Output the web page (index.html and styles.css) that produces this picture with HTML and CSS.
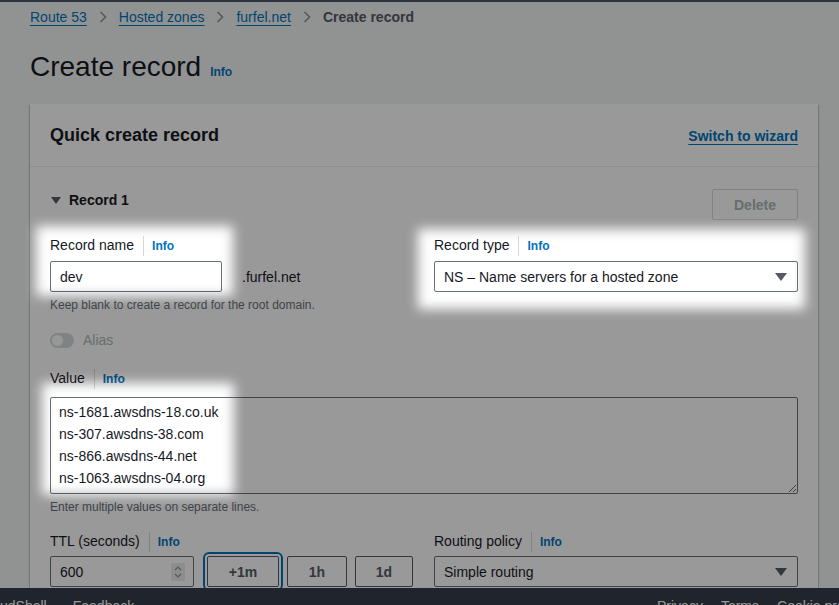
FILE: index.html
```html
<!DOCTYPE html>
<html lang="en">
<head>
  <meta charset="UTF-8">
  <meta name="viewport" content="width=device-width, initial-scale=1.0">
  <title>Create record | Route 53</title>
  <link rel="stylesheet" href="styles.css">
</head>
<body>
  <div class="topbar"></div>

  <main class="page">
    <nav class="crumbs">
      <a href="#">Route 53</a>
      <svg class="chev" width="8" height="12" viewBox="0 0 8 12"><polyline points="1.5,1 6.5,6 1.5,11" fill="none" stroke="#879596" stroke-width="1.6"/></svg>
      <a href="#">Hosted zones</a>
      <svg class="chev" width="8" height="12" viewBox="0 0 8 12"><polyline points="1.5,1 6.5,6 1.5,11" fill="none" stroke="#879596" stroke-width="1.6"/></svg>
      <a href="#">furfel.net</a>
      <svg class="chev" width="8" height="12" viewBox="0 0 8 12"><polyline points="1.5,1 6.5,6 1.5,11" fill="none" stroke="#879596" stroke-width="1.6"/></svg>
      <span class="current">Create record</span>
    </nav>

    <h1 class="title">Create record <a class="info" href="#">Info</a></h1>

    <section class="card">
      <header class="card-head">
        <h2>Quick create record</h2>
        <a class="wizard" href="#">Switch to wizard</a>
      </header>

      <div class="card-body">
        <div class="record-head">
          <div class="record-title"><span class="caret"></span>Record 1</div>
          <button class="btn btn-delete" disabled>Delete</button>
        </div>

        <div class="grid">
          <div class="field">
            <div class="label">Record name <a class="info sep" href="#">Info</a></div>
            <div class="name-row">
              <input class="input name-input" type="text" value="dev">
              <span class="suffix">.furfel.net</span>
            </div>
            <div class="hint">Keep blank to create a record for the root domain.</div>
          </div>
          <div class="field">
            <div class="label">Record type <a class="info sep" href="#">Info</a></div>
            <div class="select">NS – Name servers for a hosted zone<span class="tri"></span></div>
          </div>
        </div>

        <div class="alias">
          <span class="toggle"><span class="knob"></span></span>
          Alias
        </div>

        <div class="field value-field">
          <div class="label">Value <a class="info sep" href="#">Info</a></div>
          <textarea class="textarea">ns-1681.awsdns-18.co.uk
ns-307.awsdns-38.com
ns-866.awsdns-44.net
ns-1063.awsdns-04.org</textarea>
          <div class="hint">Enter multiple values on separate lines.</div>
        </div>

        <div class="grid ttl-grid">
          <div class="field">
            <div class="label label-tight">TTL (seconds) <a class="info sep" href="#">Info</a></div>
            <div class="ttl-row">
              <div class="input ttl-input">
                600
                <span class="spin">
                  <svg width="14" height="18" viewBox="0 0 14 18">
                    <polyline points="4,7 7,4 10,7" fill="none" stroke="#879596" stroke-width="1.2"/>
                    <polyline points="4,11 7,14 10,11" fill="none" stroke="#879596" stroke-width="1.2"/>
                  </svg>
                </span>
              </div>
              <button class="btn btn-ttl focused">+1m</button>
              <button class="btn btn-ttl w60">1h</button>
              <button class="btn btn-ttl w58">1d</button>
            </div>
          </div>
          <div class="field">
            <div class="label label-tight">Routing policy <a class="info sep" href="#">Info</a></div>
            <div class="select">Simple routing<span class="tri"></span></div>
          </div>
        </div>
      </div>
    </section>
  </main>

  <footer class="footer">
    <div class="foot-left">
      <span class="shell">CloudShell</span>
      <span>Feedback</span>
    </div>
    <div class="foot-right">
      <span>Privacy</span>
      <span>Terms</span>
      <span>Cookie preferences</span>
    </div>
  </footer>

  <!-- tutorial dimming with spotlights on the three fields -->
  <div class="dim">
    <div class="spot spot-name"></div>
    <div class="spot spot-type"></div>
    <div class="spot spot-value"></div>
  </div>
</body>
</html>
```

FILE: styles.css
```css
* {
  box-sizing: border-box;
}
body {
  margin: 0;
  height: 605px;
  overflow: hidden;
  background: #f2f3f3;
  font-family: "Liberation Sans", Arial, sans-serif;
  font-size: 14px;
  color: #16191f;
}
a {
  color: #0073bb;
}

.topbar {
  height: 2px;
  background: #4c5567;
}
.page {
  padding: 0 21px 0 30px;
}

/* breadcrumbs */
.crumbs {
  display: flex;
  align-items: center;
  gap: 12px;
  height: 30px;
  line-height: 16px;
}
.crumbs a {
  text-decoration: underline;
  text-underline-offset: 3px;
}
.crumbs .current {
  color: #545b64;
  font-weight: bold;
}

.title {
  display: flex;
  align-items: baseline;
  gap: 9px;
  height: 36px;
  margin: 17px 0 19px;
  font-size: 28px;
  line-height: 36px;
  font-weight: normal;
}
.title .info {
  line-height: 16px;
}

.info {
  font-size: 12px;
  font-weight: bold;
  text-decoration: none;
}
.info.sep {
  margin-left: 9px;
  padding-left: 8px;
  border-left: 1px solid #d5dbdb;
}

/* card */
.card {
  background: #fff;
  box-shadow: 0 1px 1px 0 rgba(0, 28, 36, 0.3), 1px 1px 1px 0 rgba(0, 28, 36, 0.15), -1px 1px 1px 0 rgba(0, 28, 36, 0.15);
  height: 520px;
}
.card-head {
  display: flex;
  justify-content: space-between;
  align-items: baseline;
  height: 63px;
  padding: 20px 20px 0;
  border-bottom: 1px solid #eaeded;
}
.card-head h2 {
  margin: 0;
  font-size: 18px;
  line-height: 22px;
}
.wizard {
  font-weight: bold;
  text-underline-offset: 3px;
}
.card-body {
  padding: 22px 20px 0;
}

.record-head {
  display: flex;
  justify-content: space-between;
  align-items: flex-start;
}
.record-title {
  display: flex;
  align-items: center;
  font-weight: bold;
  line-height: 22px;
}
.caret {
  width: 0;
  height: 0;
  margin: 0 8px 0 1px;
  border-left: 5px solid transparent;
  border-right: 5px solid transparent;
  border-top: 7px solid #545b64;
}

.btn {
  height: 31px;
  border: 1px solid #545b64;
  border-radius: 2px;
  background: #fff;
  color: #545b64;
  font-family: inherit;
  font-size: 14px;
  font-weight: bold;
  padding: 0;
}
.btn-delete {
  width: 86px;
  border-color: #d5dbdb;
  color: #aab7b8;
}

.grid {
  display: grid;
  grid-template-columns: 1fr 1fr;
  column-gap: 20px;
  margin-top: 15px;
}
.label {
  display: flex;
  align-items: baseline;
  line-height: 20px;
  margin-bottom: 5px;
}
.label-tight {
  margin-bottom: 4px;
}

.input,
.select,
.textarea {
  height: 31px;
  border: 1px solid #687078;
  border-radius: 2px;
  background: #fff;
  font-family: inherit;
  font-size: 14px;
  color: #16191f;
  padding: 0 9px;
}
.name-row {
  display: flex;
  align-items: center;
  gap: 20px;
}
.name-input {
  width: 172px;
}
.select {
  display: flex;
  align-items: center;
  justify-content: space-between;
  padding: 0 10px 0 9px;
}
.tri {
  width: 0;
  height: 0;
  border-left: 6px solid transparent;
  border-right: 6px solid transparent;
  border-top: 8px solid #545b64;
}
.hint {
  margin-top: 5px;
  font-size: 12px;
  line-height: 16px;
  color: #687078;
}

.alias {
  display: flex;
  align-items: center;
  gap: 9px;
  margin-top: 17px;
  line-height: 20px;
  color: #aab7b8;
}
.toggle {
  display: flex;
  align-items: center;
  width: 24px;
  height: 15px;
  padding: 0 2px;
  border-radius: 8px;
  background: #d5dbdb;
}
.knob {
  width: 11px;
  height: 11px;
  border-radius: 50%;
  background: #fcfcfc;
}

.value-field {
  margin-top: 18px;
}
.value-field .label {
  margin-bottom: 8px;
}
.textarea {
  display: block;
  width: 100%;
  height: 97px;
  padding: 3px 8px;
  line-height: 22px;
  resize: vertical;
}

.ttl-grid {
  margin-top: 16px;
}
.ttl-row {
  display: flex;
  gap: 8px;
}
.ttl-input {
  display: flex;
  align-items: center;
  justify-content: space-between;
  width: 144px;
  margin-right: 5px;
  padding: 0 8px 0 9px;
}
.spin {
  display: flex;
  width: 14px;
  height: 18px;
  background: #eaeded;
  border-radius: 2px;
}
.btn-ttl {
  width: 72px;
}
.btn-ttl.w60 {
  width: 60px;
}
.btn-ttl.w58 {
  width: 58px;
}
.focused {
  outline: 2px solid #0073bb;
  outline-offset: 2px;
}

/* footer */
.footer {
  position: fixed;
  left: 0;
  right: 0;
  top: 588px;
  height: 40px;
  display: flex;
  padding-top: 8px;
  line-height: 20px;
  background: #343c48;
  color: #fff;
  overflow: hidden;
  z-index: 5;
}
.foot-left {
  display: flex;
  gap: 26px;
  margin-left: -21px;
}
.foot-right {
  display: flex;
  gap: 18px;
  margin-left: auto;
  width: 182px;
  white-space: nowrap;
}

/* dim layer */
.dim {
  position: fixed;
  top: 0;
  left: 0;
  right: 0;
  bottom: 0;
  background: #999;
  mix-blend-mode: multiply;
  z-index: 20;
  pointer-events: none;
}
.spot {
  position: absolute;
  background: #fff;
  filter: blur(6px);
}
.spot-name {
  left: 36px;
  top: 226px;
  width: 197px;
  height: 70px;
}
.spot-type {
  left: 418px;
  top: 229px;
  width: 387px;
  height: 80px;
}
.spot-value {
  left: 42px;
  top: 383px;
  width: 192px;
  height: 112px;
}
```
